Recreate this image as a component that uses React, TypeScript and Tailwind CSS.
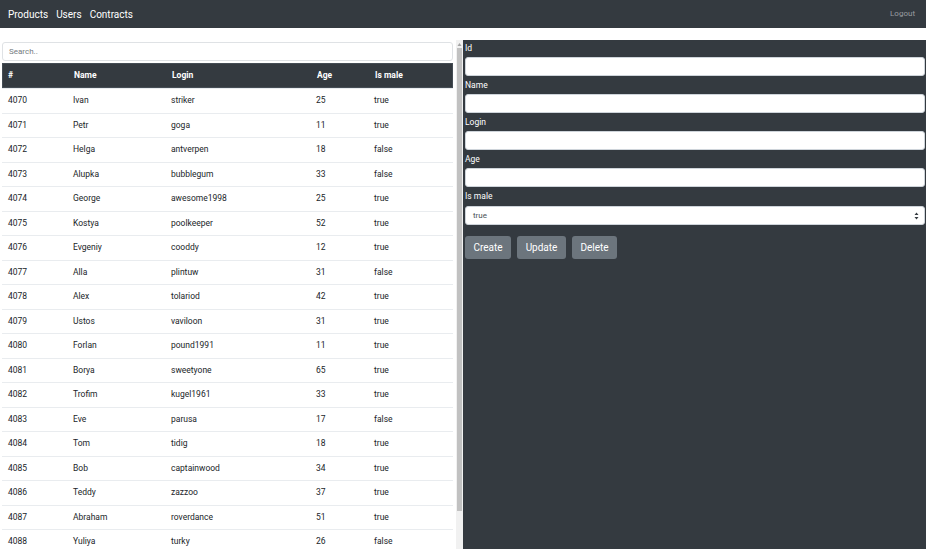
import React from "react";

const users: [number, string, string, number, boolean][] = [
  [4070, "Ivan", "striker", 25, true],
  [4071, "Petr", "goga", 11, true],
  [4072, "Helga", "antverpen", 18, false],
  [4073, "Alupka", "bubblegum", 33, false],
  [4074, "George", "awesome1998", 25, true],
  [4075, "Kostya", "poolkeeper", 52, true],
  [4076, "Evgeniy", "cooddy", 12, true],
  [4077, "Alla", "plintuw", 31, false],
  [4078, "Alex", "tolariod", 42, true],
  [4079, "Ustos", "vaviloon", 31, true],
  [4080, "Forlan", "pound1991", 11, true],
  [4081, "Borya", "sweetyone", 65, true],
  [4082, "Trofim", "kugel1961", 33, true],
  [4083, "Eve", "parusa", 17, false],
  [4084, "Tom", "tidig", 18, true],
  [4085, "Bob", "captainwood", 34, true],
  [4086, "Teddy", "zazzoo", 37, true],
  [4087, "Abraham", "roverdance", 51, true],
  [4088, "Yuliya", "turky", 26, false],
];

const cols = "grid grid-cols-[65px_98px_145px_58px_1fr]";

export default function App() {
  return (
    <div className="h-[549px] w-[926px] overflow-hidden bg-white font-['Roboto',sans-serif]">
      {/* Navbar */}
      <nav className="flex h-[28px] items-center justify-between bg-[#343a40] px-[8px]">
        <div className="flex gap-[8px] pt-[1px] text-[10px] text-white">
          <span>Products</span>
          <span>Users</span>
          <span>Contracts</span>
        </div>
        <span className="pr-[3px] text-[8px] text-[#9a9da0]">Logout</span>
      </nav>

      <div className="h-[12px]" />

      <div className="flex h-[509px]">
        {/* Users table */}
        <div className="flex w-[463px]">
          <div className="w-[456px] overflow-hidden pl-[2px] pr-[3px] pt-[2px]">
            <div className="flex h-[19px] items-center rounded-[3px] border border-[#dfe2e5] px-[6px] text-[8px] text-[#757b80]">
              Search..
            </div>
            <div className={`${cols} mt-[2px] h-[25px] items-center border border-[#454d55] bg-[#343a40] text-[8.5px] font-bold text-white`}>
              <span className="pl-[5px]">#</span>
              <span className="pl-[6px]">Name</span>
              <span className="pl-[6px]">Login</span>
              <span className="pl-[6px]">Age</span>
              <span className="pl-[6px]">Is male</span>
            </div>
            {users.map(([id, name, login, age, male]) => (
              <div key={id} className={`${cols} h-[24.5px] items-center border-t border-[#e9ecef] text-[8.5px] text-[#212529]`}>
                <span className="pl-[6px]">{id}</span>
                <span className="pl-[6px]">{name}</span>
                <span className="pl-[6px]">{login}</span>
                <span className="pl-[6px]">{age}</span>
                <span className="pl-[6px]">{male ? "true" : "false"}</span>
              </div>
            ))}
          </div>
          {/* scrollbar */}
          <div className="flex w-[7px] flex-col items-center bg-[#f1f1f1]">
            <svg width="5" height="5" viewBox="0 0 5 5" className="mt-[2px]">
              <path d="M2.5 1 L4.5 4 L0.5 4 Z" fill="#a3a3a3" />
            </svg>
            <div className="mt-[1px] h-[463px] w-[5px] bg-[#c1c1c1]" />
          </div>
        </div>

        {/* Edit form */}
        <div className="flex-1 bg-[#343a40] pl-[2px] pr-[1px]">
          {["Id", "Name", "Login", "Age"].map((label, i) => (
            <div key={label}>
              <div className={`flex ${i === 0 ? "h-[17px]" : "h-[18px]"} items-center text-[8.5px] text-white`}>{label}</div>
              <div className="h-[19px] rounded-[3px] border border-[#ced4da] bg-white" />
            </div>
          ))}
          <div className="flex h-[19px] items-center text-[8.5px] text-white">Is male</div>
          <div className="flex h-[19px] items-center justify-between rounded-[3px] border border-[#ced4da] bg-white pl-[7px] pr-[5px] text-[8px] text-[#495057]">
            <span>true</span>
            <svg width="5" height="8" viewBox="0 0 5 8">
              <path d="M2.5 0.5 L4.5 3 L0.5 3 Z M2.5 7.5 L4.5 5 L0.5 5 Z" fill="#343a40" />
            </svg>
          </div>
          <div className="mt-[11px] flex gap-[6px]">
            {["Create", "Update", "Delete"].map((b) => (
              <button key={b} className="h-[23px] rounded-[3px] bg-[#6c757d] px-[8.5px] text-[10px] font-normal text-white">
                {b}
              </button>
            ))}
          </div>
        </div>
      </div>
    </div>
  );
}
